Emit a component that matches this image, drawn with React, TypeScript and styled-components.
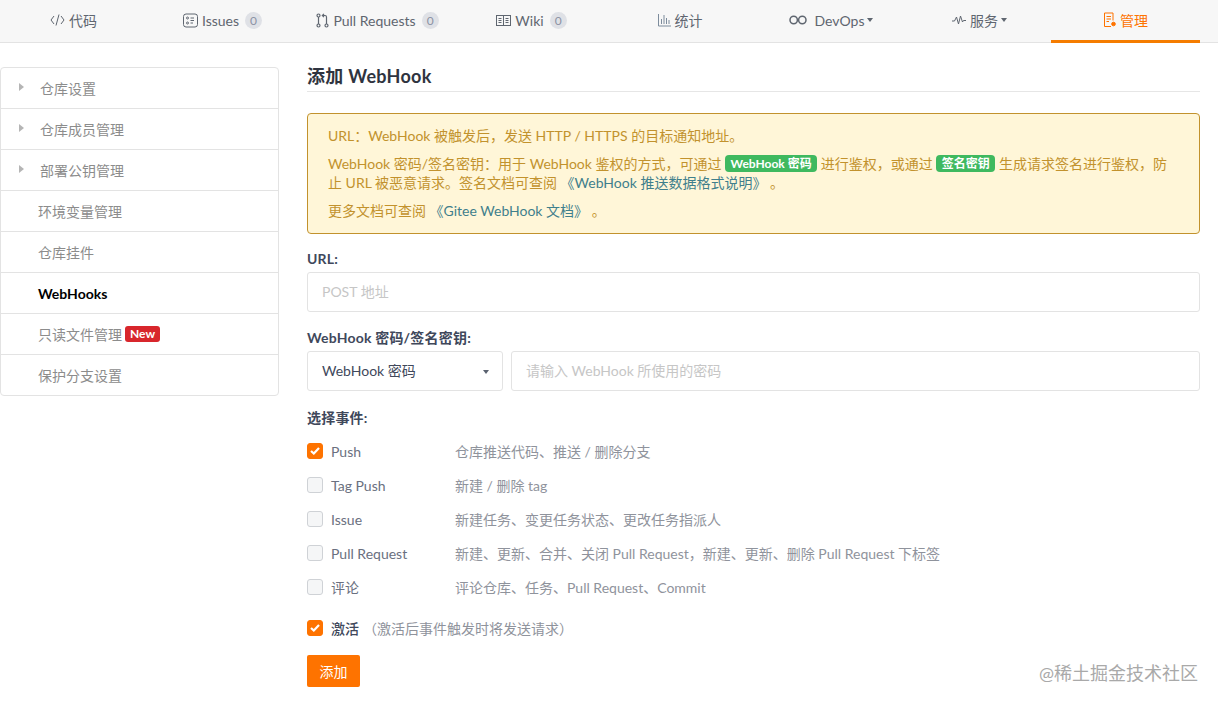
import React from 'react';
import styled, { createGlobalStyle } from 'styled-components';

const GlobalStyle = createGlobalStyle`
  html, body {
    margin: 0;
    padding: 0;
    background: #ffffff;
  }
  body {
    font-family: Lato, 'Noto Sans CJK SC', sans-serif;
    font-size: 14px;
    color: #40485b;
  }
  * {
    box-sizing: border-box;
  }
`;

const CodeIcon = () => (
  <svg width="15" height="14" viewBox="0 0 15 14" fill="none" stroke="currentColor" strokeWidth="1">
    <path d="M4 3 L1 7 L4 11 M11 3 L14 7 L11 11 M9 1.5 L6 12.5" />
  </svg>
);

const IssueIcon = () => (
  <svg width="15" height="15" viewBox="0 0 15 15" fill="none" stroke="currentColor" strokeWidth="1">
    <rect x=".5" y="1" width="14" height="13" rx="2.5" />
    <circle cx="4.5" cy="5" r="1" />
    <circle cx="4.5" cy="10" r="1" />
    <path d="M7.5 5 H11 M7.5 7.5 H11 M7.5 10 H10" />
  </svg>
);

const PullIcon = () => (
  <svg width="13" height="15" viewBox="0 0 13 15" fill="none" stroke="currentColor" strokeWidth="1.2">
    <circle cx="2.5" cy="2.5" r="1.5" />
    <circle cx="2.5" cy="12.5" r="1.5" />
    <circle cx="10.5" cy="12.5" r="1.5" />
    <path d="M2.5 4 V11 M10.5 11 V4 Q10.5 2.5 9 2.5 H6.5 M8 .8 L6.3 2.5 L8 4.2" />
  </svg>
);

const WikiIcon = () => (
  <svg width="15" height="13" viewBox="0 0 15 13" fill="none" stroke="currentColor" strokeWidth="1">
    <rect x=".5" y="1.5" width="14" height="10" />
    <path d="M7.5 1.5 V11.5 M2.5 4.5 H5.5 M2.5 6.5 H5.5 M2.5 8.5 H5.5 M9.5 4.5 H12.5 M9.5 6.5 H12.5 M9.5 8.5 H12.5" />
  </svg>
);

const StatsIcon = () => (
  <svg width="13" height="14" viewBox="0 0 13 14" fill="none" stroke="#7d8c9c" strokeWidth="1">
    <path d="M.5 1 V13 H13 M3.5 11 V6 M6 11 V2 M8.5 11 V5 M11 11 V7" />
  </svg>
);

const DevOpsIcon = () => (
  <svg width="18" height="10" viewBox="0 0 18 10" fill="none" stroke="currentColor" strokeWidth="1.5">
    <circle cx="4.7" cy="5" r="3.7" />
    <circle cx="13.3" cy="5" r="3.7" />
  </svg>
);

const PulseIcon = () => (
  <svg width="14" height="12" viewBox="0 0 14 12" fill="none" stroke="currentColor" strokeWidth="1">
    <path d="M0 7 H2.5 L4.5 3 L6.5 10 L8.5 2 L10.5 8 L11.5 6.5 H14" />
  </svg>
);

const ManageIcon = () => (
  <svg width="13" height="16" viewBox="0 0 13 16" fill="none" stroke="currentColor" strokeWidth="1">
    <path d="M8 14.5 H1.5 V1 H10 V8.5 M3.5 4.5 H8 M3.5 7 H8 M3.5 9.5 H6" />
    <circle cx="10.5" cy="12" r="1.8" fill="currentColor" />
  </svg>
);

const CheckMark = () => (
  <svg width="10" height="8" viewBox="0 0 10 8" fill="none" stroke="#ffffff" strokeWidth="2.2">
    <path d="M1 4 L3.8 6.5 L9 1" />
  </svg>
);

const tabs = [
  { label: '代码', icon: <CodeIcon /> },
  { label: 'Issues', icon: <IssueIcon />, count: 0 },
  { label: 'Pull Requests', icon: <PullIcon />, count: 0 },
  { label: 'Wiki', icon: <WikiIcon />, count: 0 },
  { label: '统计', icon: <StatsIcon /> },
  { label: 'DevOps', icon: <DevOpsIcon />, caret: true, wide: true },
  { label: '服务', icon: <PulseIcon />, caret: true },
  { label: '管理', icon: <ManageIcon />, active: true },
];

const sideItems = [
  { label: '仓库设置', arrow: true },
  { label: '仓库成员管理', arrow: true },
  { label: '部署公钥管理', arrow: true },
  { label: '环境变量管理' },
  { label: '仓库挂件' },
  { label: 'WebHooks', current: true },
  { label: '只读文件管理', isNew: true },
  { label: '保护分支设置' },
];

const events = [
  { name: 'Push', desc: '仓库推送代码、推送 / 删除分支', checked: true },
  { name: 'Tag Push', desc: '新建 / 删除 tag' },
  { name: 'Issue', desc: '新建任务、变更任务状态、更改任务指派人' },
  { name: 'Pull Request', desc: '新建、更新、合并、关闭 Pull Request，新建、更新、删除 Pull Request 下标签' },
  { name: '评论', desc: '评论仓库、任务、Pull Request、Commit' },
];

export default function App() {
  return (
    <>
      <GlobalStyle />
      <Page>
        <TabBar>
          <TabRow>
            {tabs.map((tab) => (
              <Tab key={tab.label} $active={tab.active}>
                <TabIcon $wide={tab.wide}>{tab.icon}</TabIcon>
                {tab.label}
                {tab.count !== undefined && <Count>{tab.count}</Count>}
                {tab.caret && <TabCaret />}
              </Tab>
            ))}
          </TabRow>
        </TabBar>

        <Body>
          <SideMenu>
            {sideItems.map((item) => (
              <SideItem key={item.label} $current={item.current} $arrow={item.arrow}>
                {item.arrow && <SideArrow />}
                {item.label}
                {item.isNew && <NewBadge>New</NewBadge>}
              </SideItem>
            ))}
          </SideMenu>

          <Main>
            <Title>添加 WebHook</Title>

            <Notice>
              <NoticeLine>URL：WebHook 被触发后，发送 HTTP / HTTPS 的目标通知地址。</NoticeLine>
              <NoticeLine>
                WebHook 密码/签名密钥：用于 WebHook 鉴权的方式，可通过 <GreenTag>WebHook 密码</GreenTag> 进行鉴权，或通过{' '}
                <GreenTag>签名密钥</GreenTag> 生成请求签名进行鉴权，防止 URL 被恶意请求。签名文档可查阅{' '}
                <DocLink>《WebHook 推送数据格式说明》</DocLink> 。
              </NoticeLine>
              <NoticeLine>
                更多文档可查阅 <DocLink>《Gitee WebHook 文档》</DocLink> 。
              </NoticeLine>
            </Notice>

            <FieldLabel>URL:</FieldLabel>
            <TextInput placeholder="POST 地址" />

            <SecretLabel>WebHook 密码/签名密钥:</SecretLabel>
            <SecretRow>
              <SelectBox>
                WebHook 密码
                <SelectCaret />
              </SelectBox>
              <SecretInput placeholder="请输入 WebHook 所使用的密码" />
            </SecretRow>

            <EventsLabel>选择事件:</EventsLabel>
            <EventList>
              {events.map((ev) => (
                <EventRow key={ev.name}>
                  <Check $on={ev.checked}>{ev.checked && <CheckMark />}</Check>
                  <EventName>{ev.name}</EventName>
                  <EventDesc>{ev.desc}</EventDesc>
                </EventRow>
              ))}
            </EventList>

            <ActiveRow>
              <Check $on>
                <CheckMark />
              </Check>
              <ActiveName>激活</ActiveName>
              <ActiveHint>（激活后事件触发时将发送请求）</ActiveHint>
            </ActiveRow>

            <SubmitButton>添加</SubmitButton>
          </Main>
        </Body>

        <Watermark>@稀土掘金技术社区</Watermark>
      </Page>
    </>
  );
}

const Page = styled.div`
  position: relative;
  width: 1218px;
  height: 703px;
  overflow: hidden;
`;

const TabBar = styled.div`
  height: 43px;
  background: #f7f7f7;
  border-bottom: 1px solid #e3e3e3;
`;

const TabRow = styled.div`
  display: grid;
  grid-template-columns: 147px 151px 159px 149px 148px 154px 143px 149px;
  height: 43px;
`;

const Tab = styled.div<{ $active?: boolean }>`
  display: flex;
  align-items: center;
  justify-content: center;
  height: 43px;
  padding-bottom: ${(p) => (p.$active ? '0' : '3px')};
  font-size: 14px;
  color: ${(p) => (p.$active ? '#fe7300' : '#5f6670')};
  border-bottom: ${(p) => (p.$active ? '3px solid #f57c00' : 'none')};
`;

const TabIcon = styled.span<{ $wide?: boolean }>`
  display: inline-flex;
  align-items: center;
  margin-right: ${(p) => (p.$wide ? '8px' : '4px')};
`;

const Count = styled.span`
  display: inline-block;
  min-width: 17px;
  height: 17px;
  margin-left: 6px;
  border-radius: 9px;
  background: #dfe1e6;
  color: #8c92a4;
  font-size: 12px;
  line-height: 17px;
  text-align: center;
`;

const TabCaret = styled.span`
  width: 0;
  height: 0;
  margin-left: 3px;
  border-left: 3.5px solid transparent;
  border-right: 3.5px solid transparent;
  border-top: 4px solid #5f6670;
`;

const Body = styled.div`
  display: grid;
  grid-template-columns: 279px 893px;
  column-gap: 28px;
  align-items: start;
`;

const SideMenu = styled.div`
  margin-top: 24px;
  border: 1px solid #e3e3e3;
  border-radius: 4px;
`;

const SideItem = styled.div<{ $current?: boolean; $arrow?: boolean }>`
  display: flex;
  align-items: center;
  height: 41px;
  padding-left: ${(p) => (p.$arrow ? '18px' : '37px')};
  font-size: 14px;
  font-weight: ${(p) => (p.$current ? 700 : 400)};
  color: ${(p) => (p.$current ? '#000000' : '#8c8c8c')};
  border-bottom: 1px solid #e3e3e3;

  &:last-child {
    height: 40px;
    border-bottom: none;
  }
`;

const SideArrow = styled.span`
  width: 0;
  height: 0;
  margin-right: 16px;
  margin-top: -2px;
  border-top: 4px solid transparent;
  border-bottom: 4px solid transparent;
  border-left: 5px solid #b5b5b5;
`;

const NewBadge = styled.span`
  margin-left: 3px;
  padding: 0 5px;
  height: 16px;
  border-radius: 3px;
  background: #d8262c;
  color: #ffffff;
  font-size: 12px;
  font-weight: 700;
  line-height: 16px;
`;

const Main = styled.div`
  display: flex;
  flex-direction: column;
`;

const Title = styled.h2`
  margin: 21px 0 21px;
  height: 28px;
  font-size: 18px;
  font-weight: 700;
  line-height: 24px;
  letter-spacing: 0.3px;
  color: #2f3440;
  border-bottom: 1px solid #e6e6e6;
`;

const Notice = styled.div`
  height: 121px;
  padding: 12px 20px 0 20px;
  background: #fff6d8;
  border: 1px solid #c2922d;
  border-radius: 4px;
  color: #c2922d;
  font-size: 14px;
  line-height: 19px;
`;

const NoticeLine = styled.p`
  margin: 0 0 9px;
`;

const GreenTag = styled.span`
  display: inline-block;
  height: 17px;
  padding: 0 5.5px;
  border-radius: 4px;
  background: #3fb95f;
  color: #ffffff;
  font-size: 12px;
  font-weight: 700;
  line-height: 17px;
  vertical-align: 1px;
`;

const DocLink = styled.span`
  color: #3f7f8c;
`;

const FieldLabel = styled.label`
  margin: 15px 0 4px;
  height: 19px;
  font-size: 14px;
  font-weight: 700;
  line-height: 19px;
  letter-spacing: 0.2px;
  color: #40485b;
`;

const SecretLabel = styled(FieldLabel)`
  margin: 16px 0 4px;
`;

const EventsLabel = styled(FieldLabel)`
  margin: 17px 0 0;
`;

const TextInput = styled.input`
  flex: none;
  width: 100%;
  height: 40px;
  padding: 0 14px 2px;
  background: #ffffff;
  border: 1px solid #e3e3e3;
  border-radius: 3px;
  font-family: inherit;
  font-size: 14px;
  outline: none;

  &::placeholder {
    color: #c6c6c6;
    opacity: 1;
  }
`;

const SecretInput = styled(TextInput)`
  flex: 1;
  width: auto;
`;

const SecretRow = styled.div`
  display: flex;
  gap: 8px;
  height: 40px;
`;

const SelectBox = styled.div`
  position: relative;
  flex: none;
  display: flex;
  align-items: center;
  width: 196px;
  padding: 0 0 2px 14px;
  border: 1px solid #e3e3e3;
  border-radius: 3px;
  font-size: 14px;
  color: #40485b;
`;

const SelectCaret = styled.span`
  position: absolute;
  right: 13px;
  top: 18px;
  width: 0;
  height: 0;
  border-left: 3.5px solid transparent;
  border-right: 3.5px solid transparent;
  border-top: 4px solid #5a6270;
`;

const EventList = styled.div`
  display: flex;
  flex-direction: column;
  margin-top: 7px;
`;

const EventRow = styled.div`
  display: flex;
  align-items: center;
  height: 34px;
  font-size: 14px;
`;

const Check = styled.span<{ $on?: boolean }>`
  flex: none;
  display: inline-flex;
  align-items: center;
  justify-content: center;
  width: 16px;
  height: 16px;
  margin-right: 8px;
  border-radius: 3px;
  background: ${(p) => (p.$on ? '#fe7300' : '#f5f6f7')};
  border: 1px solid ${(p) => (p.$on ? '#fe7300' : '#cfd2d6')};
`;

const EventName = styled.span`
  width: 124px;
  color: #6a7080;
`;

const EventDesc = styled.span`
  color: #8f939c;
`;

const ActiveRow = styled.div`
  display: flex;
  align-items: center;
  height: 20px;
  margin-top: 14px;
  font-size: 14px;
`;

const ActiveName = styled.span`
  color: #40485b;
  font-weight: 500;
`;

const ActiveHint = styled.span`
  margin-left: 4px;
  color: #8f939c;
`;

const SubmitButton = styled.button`
  width: 53px;
  height: 32px;
  margin-top: 17px;
  border: none;
  border-radius: 2px;
  background: #fe7300;
  color: #ffffff;
  font-family: inherit;
  font-size: 14px;
`;

const Watermark = styled.div`
  position: absolute;
  right: 20px;
  top: 661px;
  font-size: 18px;
  line-height: 24px;
  color: #a9a9a9;
`;
